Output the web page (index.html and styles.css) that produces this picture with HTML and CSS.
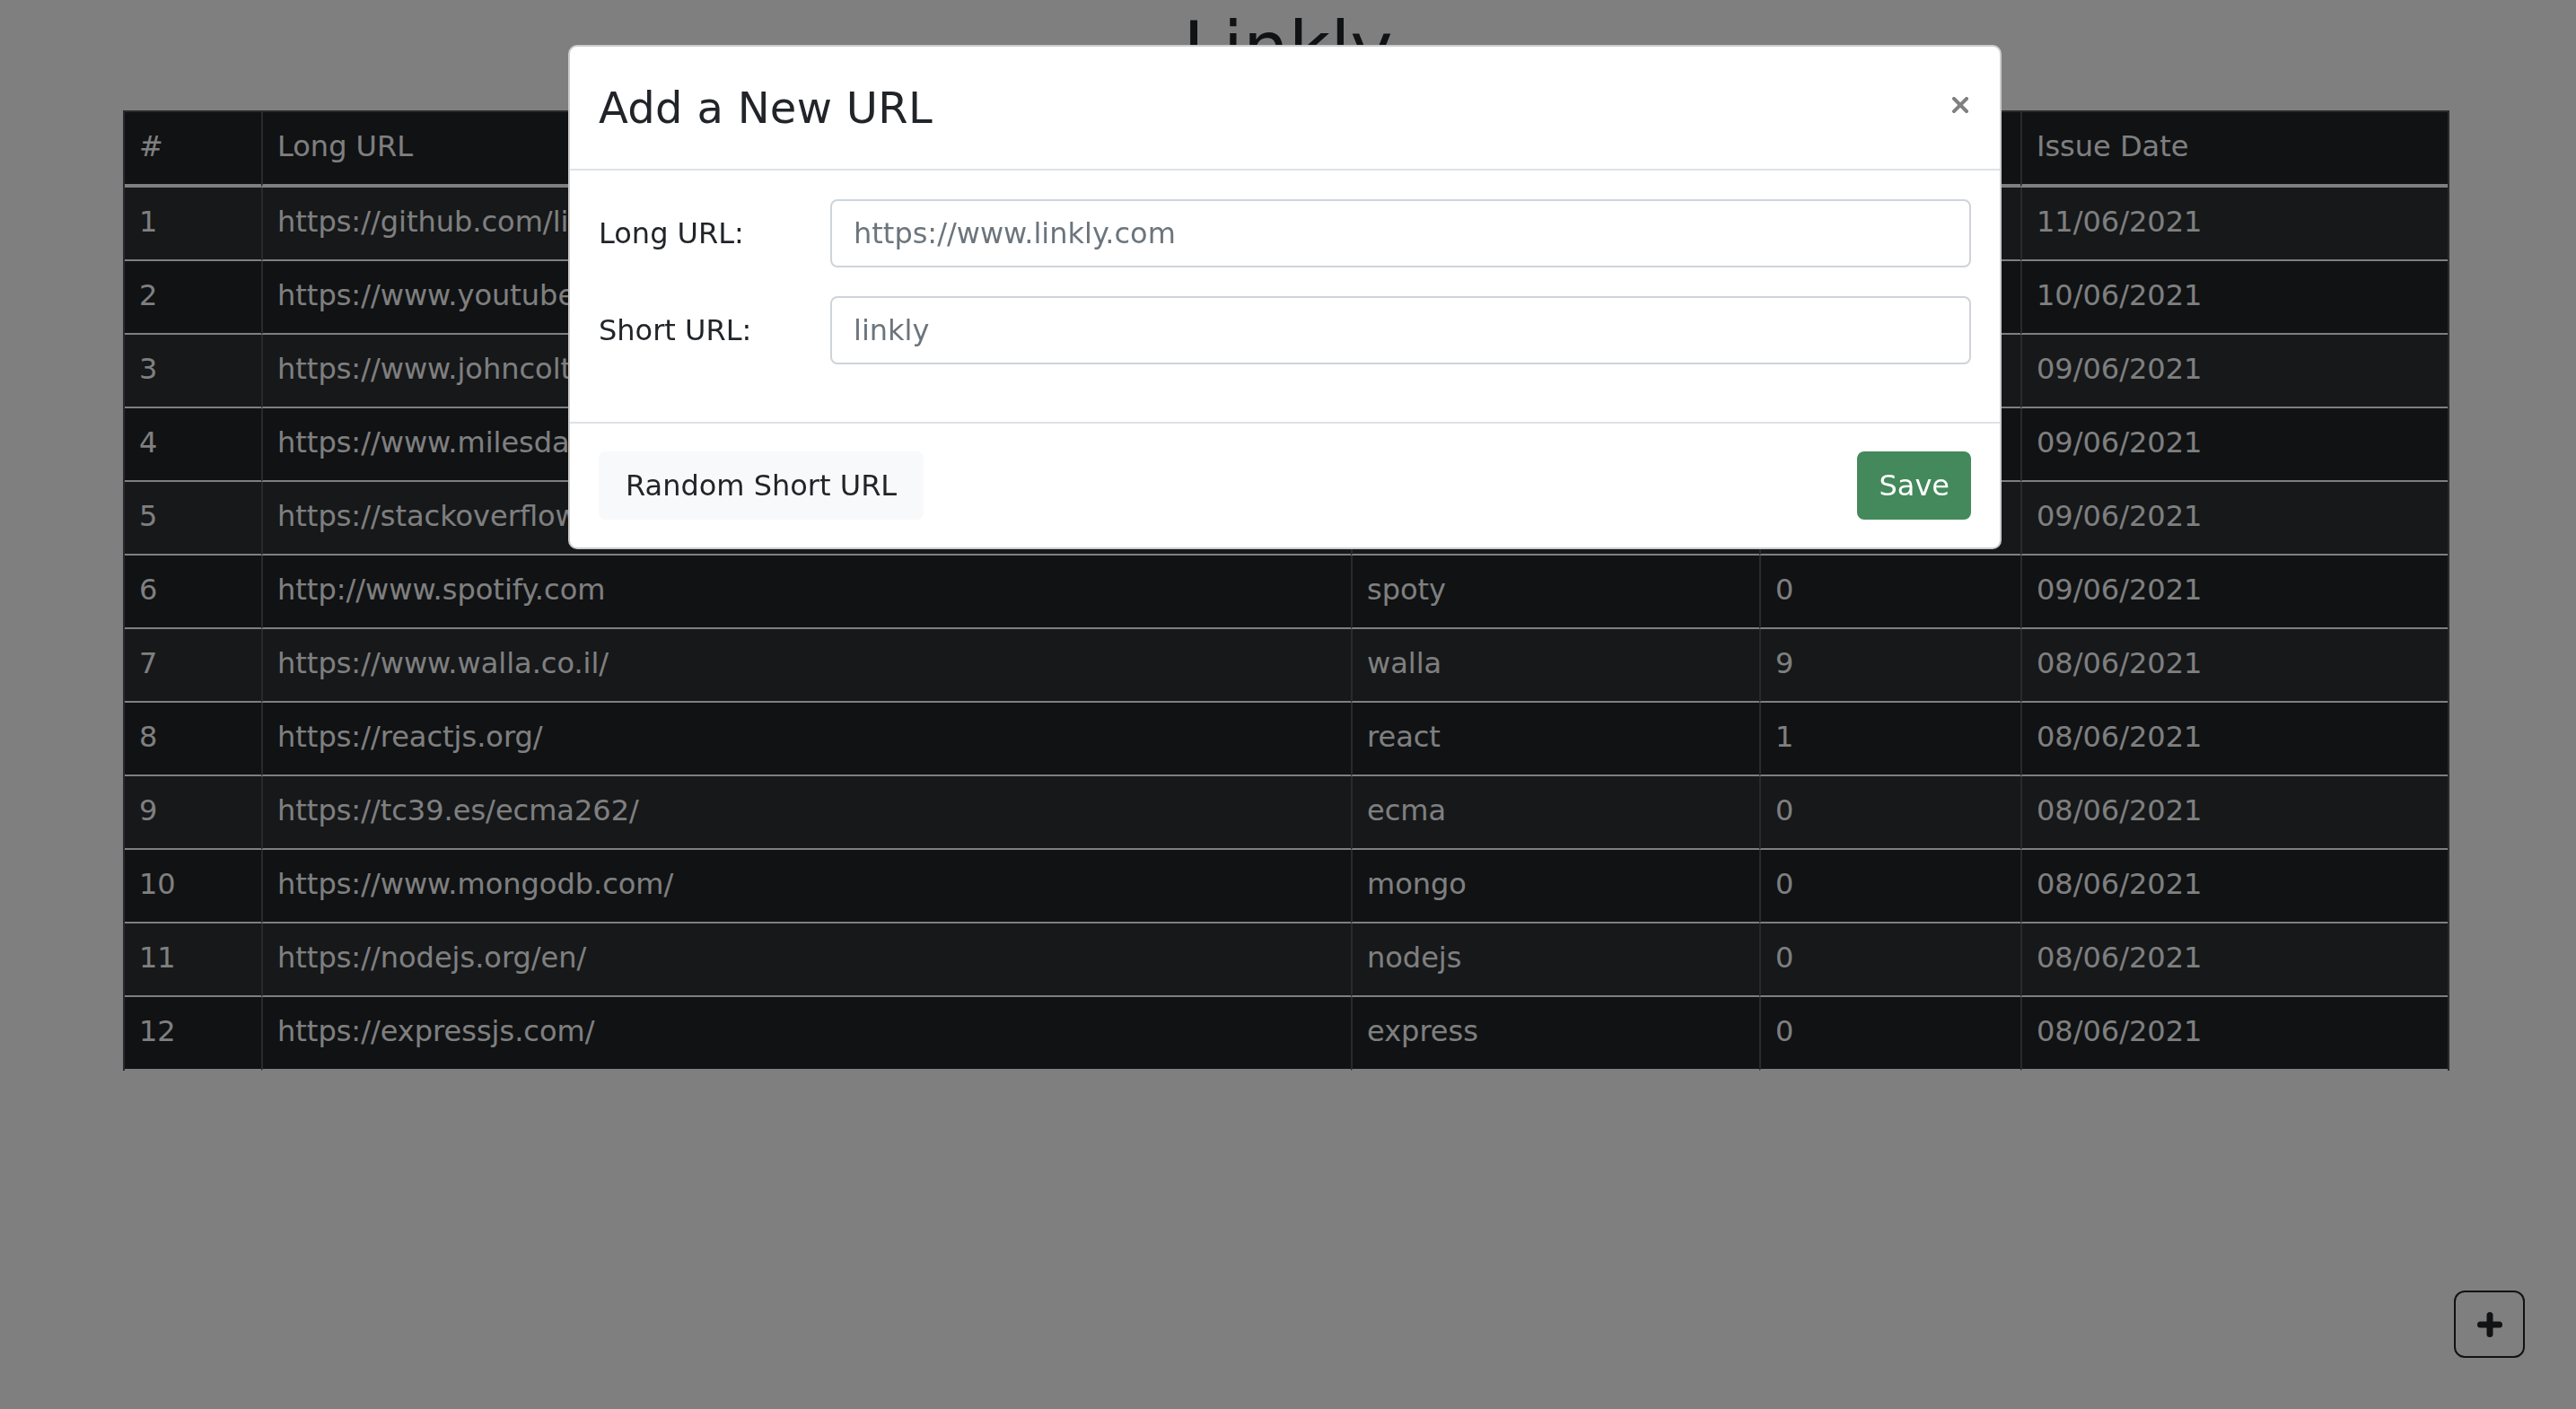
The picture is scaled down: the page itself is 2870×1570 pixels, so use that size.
FILE: index.html
```html
<!DOCTYPE html>
<html lang="en">
<head>
<meta charset="utf-8">
<title>Linkly</title>
<link rel="stylesheet" href="styles.css">
</head>
<body>
  <main class="page">
    <h1 class="title">Linkly</h1>
    <table class="links">
      <colgroup>
        <col class="c-num"><col class="c-long"><col class="c-short"><col class="c-clicks"><col class="c-date">
      </colgroup>
      <thead>
        <tr><th>#</th><th>Long URL</th><th>Short URL</th><th>Clicks</th><th>Issue Date</th></tr>
      </thead>
      <tbody>
        <tr><td>1</td><td>https://github.com/linkly-app</td><td>github</td><td>3</td><td>11/06/2021</td></tr>
        <tr><td>2</td><td>https://www.youtube.com/</td><td>youtube</td><td>5</td><td>10/06/2021</td></tr>
        <tr><td>3</td><td>https://www.johncoltrane.com/</td><td>coltrane</td><td>2</td><td>09/06/2021</td></tr>
        <tr><td>4</td><td>https://www.milesdavis.com/</td><td>miles</td><td>1</td><td>09/06/2021</td></tr>
        <tr><td>5</td><td>https://stackoverflow.com/</td><td>stack</td><td>4</td><td>09/06/2021</td></tr>
        <tr><td>6</td><td>http://www.spotify.com</td><td>spoty</td><td>0</td><td>09/06/2021</td></tr>
        <tr><td>7</td><td>https://www.walla.co.il/</td><td>walla</td><td>9</td><td>08/06/2021</td></tr>
        <tr><td>8</td><td>https://reactjs.org/</td><td>react</td><td>1</td><td>08/06/2021</td></tr>
        <tr><td>9</td><td>https://tc39.es/ecma262/</td><td>ecma</td><td>0</td><td>08/06/2021</td></tr>
        <tr><td>10</td><td>https://www.mongodb.com/</td><td>mongo</td><td>0</td><td>08/06/2021</td></tr>
        <tr><td>11</td><td>https://nodejs.org/en/</td><td>nodejs</td><td>0</td><td>08/06/2021</td></tr>
        <tr><td>12</td><td>https://expressjs.com/</td><td>express</td><td>0</td><td>08/06/2021</td></tr>
      </tbody>
    </table>
    <button class="fab" type="button" aria-label="Add URL">
      <svg width="28" height="28" viewBox="0 0 28 28"><path d="M14 3.5V24.5M3.5 14H24.5" stroke="#212529" stroke-width="7" stroke-linecap="round" fill="none"/></svg>
    </button>
  </main>

  <div class="backdrop"></div>

  <div class="modal" role="dialog">
    <div class="modal-header">
      <h4 class="modal-title">Add a New URL</h4>
      <button class="close" type="button" aria-label="Close">
        <svg width="18" height="18" viewBox="0 0 18 18"><path d="M2 2L16 16M16 2L2 16" stroke="#808080" stroke-width="4" stroke-linecap="square" fill="none"/></svg>
      </button>
    </div>
    <div class="modal-body">
      <div class="form-row">
        <label class="form-label" for="longUrl">Long URL:</label>
        <input class="form-control" id="longUrl" type="text" placeholder="https://www.linkly.com">
      </div>
      <div class="form-row">
        <label class="form-label" for="shortUrl">Short URL:</label>
        <input class="form-control" id="shortUrl" type="text" placeholder="linkly">
      </div>
    </div>
    <div class="modal-footer">
      <button class="btn btn-light" type="button">Random Short URL</button>
      <button class="btn btn-success" type="button">Save</button>
    </div>
  </div>
</body>
</html>
```

FILE: styles.css
```css
html, body {
  margin: 0;
  padding: 0;
}

body {
  background: #ffffff;
  font-family: "DejaVu Sans", "Liberation Sans", sans-serif;
  font-size: 32px;
  color: #212529;
  width: 2870px;
  height: 1570px;
  overflow: hidden;
}

.page {
  display: flex;
  flex-direction: column;
}

.title {
  margin: 0;
  padding-top: 6px;
  font-size: 80px;
  line-height: 96px;
  font-weight: 400;
  text-align: center;
  color: #212529;
}

.links {
  margin-top: 21px;
  margin-left: 137px;
  width: 2592px;
  table-layout: fixed;
  border-collapse: separate;
  border-spacing: 0;
  background: #212529;
  color: #ffffff;
  border: 2px solid #505459;
  border-bottom: none;
}

.c-num { width: 152px; }
.c-long { width: 1214px; }
.c-short { width: 455px; }
.c-clicks { width: 291px; }
.c-date { width: 476px; }

.links th,
.links td {
  padding: 14px 16px 18px;
  font-size: 32px;
  line-height: 48px;
  font-weight: 400;
  text-align: left;
  white-space: nowrap;
  overflow: hidden;
  border-left: 2px solid #505459;
  border-bottom: 2px solid #ffffff;
}

.links th:first-child,
.links td:first-child {
  border-left: none;
}

.links th {
  border-bottom: 4px solid #ffffff;
}

.links tbody tr:nth-child(odd) {
  background: #2c3034;
}

.fab {
  position: fixed;
  right: 57px;
  bottom: 57px;
  width: 79px;
  height: 75px;
  box-sizing: border-box;
  border: 2px solid #212529;
  border-radius: 12px;
  background: transparent;
  display: flex;
  align-items: center;
  justify-content: center;
  padding: 0;
  z-index: 1;
}

.backdrop {
  position: fixed;
  inset: 0;
  background: rgba(0, 0, 0, 0.5);
  z-index: 10;
}

.modal {
  position: fixed;
  left: 633px;
  top: 50px;
  width: 1597px;
  box-sizing: border-box;
  background: #ffffff;
  border: 2px solid rgba(0, 0, 0, 0.2);
  border-radius: 10px;
  z-index: 20;
  display: flex;
  flex-direction: column;
}

.modal-header {
  display: flex;
  align-items: flex-start;
  justify-content: space-between;
  padding: 32px;
  border-bottom: 2px solid #dee2e6;
}

.modal-title {
  margin: 0;
  font-size: 48px;
  line-height: 72px;
  font-weight: 400;
  color: #212529;
  letter-spacing: 0.3px;
}

.close {
  border: none;
  background: transparent;
  padding: 0;
  margin: 24px 3px 0 0;
  width: 18px;
  height: 18px;
  display: flex;
}

.modal-body {
  padding: 32px;
  display: flex;
  flex-direction: column;
  gap: 32px;
  padding-bottom: 64px;
}

.form-row {
  display: grid;
  grid-template-columns: 258px 1fr;
  align-items: center;
}

.form-label {
  font-size: 32px;
  line-height: 48px;
  color: #212529;
}

.form-control {
  box-sizing: border-box;
  width: 100%;
  height: 76px;
  padding: 12px 24px;
  border: 2px solid #ced4da;
  border-radius: 8px;
  font-family: "DejaVu Sans", "Liberation Sans", sans-serif;
  font-size: 32px;
  line-height: 48px;
  color: #495057;
  background: #ffffff;
  outline: none;
}

.form-control::placeholder {
  color: #6c757d;
  opacity: 1;
}

.modal-footer {
  display: flex;
  align-items: center;
  justify-content: space-between;
  padding: 31px 32px;
  border-top: 2px solid #dee2e6;
}

.btn {
  font-family: "DejaVu Sans", "Liberation Sans", sans-serif;
  font-size: 32px;
  line-height: 48px;
  padding: 12px 24px;
  border: 2px solid transparent;
  border-radius: 8px;
  cursor: pointer;
}

.btn-light {
  background: #f8f9fa;
  border-color: #f8f9fa;
  color: #212529;
  padding: 12px 28px;
}

.btn-success {
  background: #43895b;
  border-color: #43895b;
  color: #ffffff;
  padding: 12px 22px;
}
```
